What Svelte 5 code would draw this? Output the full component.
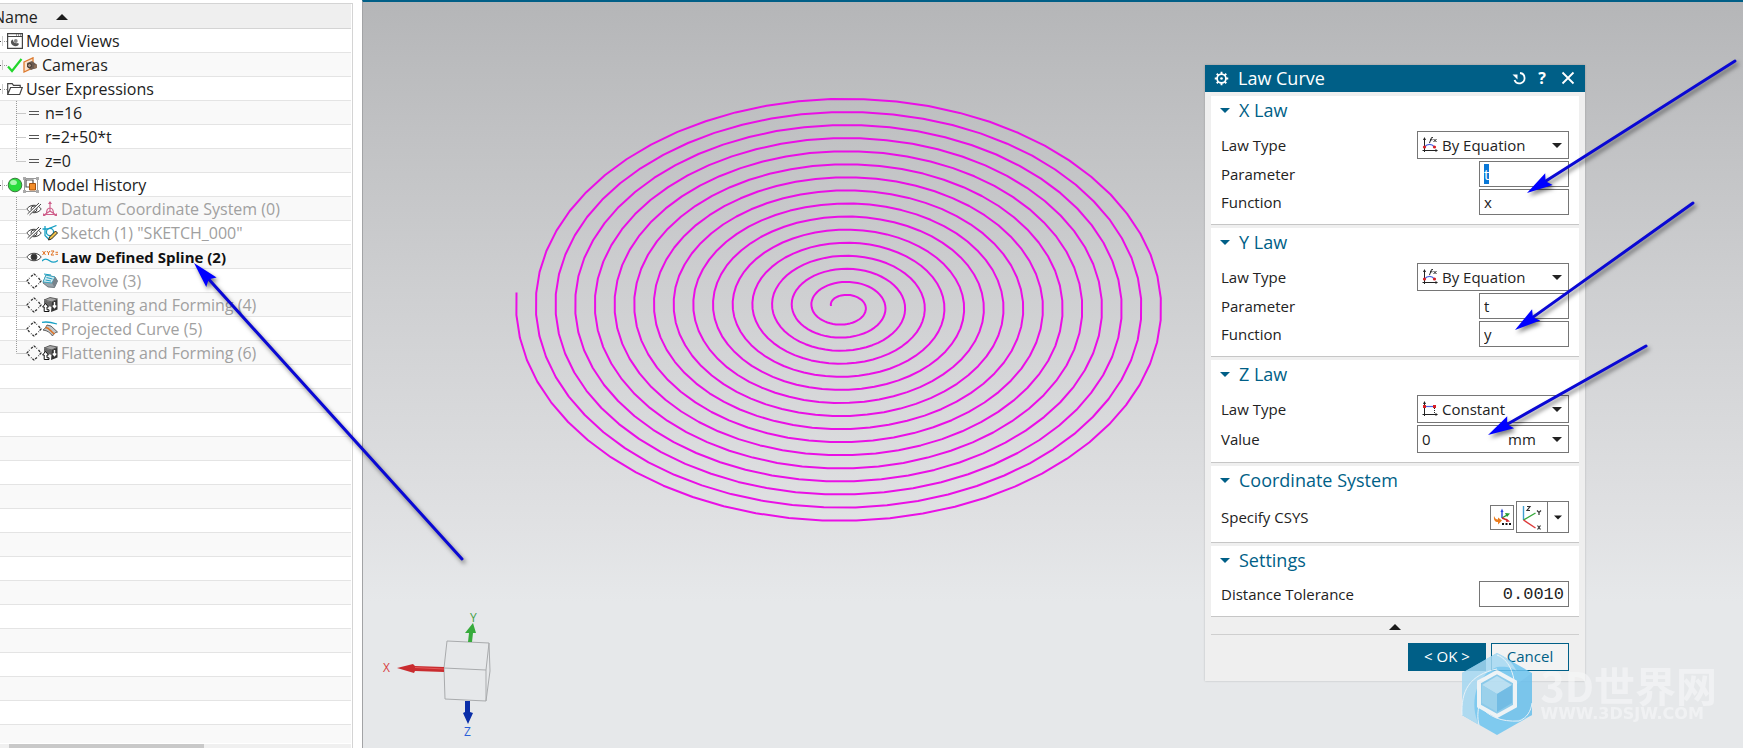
<script lang="ts">
  import { onMount } from "svelte";

  type Child = { label: string; vis?: string; icon: string; dim?: boolean; active?: boolean };
  type Node = { label: string; icons: string[]; children: Child[] };

  const tree: Node[] = [
    { label: "Model Views", icons: ["views"], children: [] },
    { label: "Cameras", icons: ["check", "camera"], children: [] },
    {
      label: "User Expressions",
      icons: ["folder"],
      children: [
        { label: "n=16", icon: "equals" },
        { label: "r=2+50*t", icon: "equals" },
        { label: "z=0", icon: "equals" },
      ],
    },
    {
      label: "Model History",
      icons: ["ball", "history"],
      children: [
        { label: "Datum Coordinate System (0)", vis: "hidden", icon: "datum", dim: true },
        { label: 'Sketch (1) "SKETCH_000"', vis: "hidden", icon: "sketch", dim: true },
        { label: "Law Defined Spline (2)", vis: "eye", icon: "law", active: true },
        { label: "Revolve (3)", vis: "ghost", icon: "revolve", dim: true },
        { label: "Flattening and Forming (4)", vis: "ghost", icon: "flatten", dim: true },
        { label: "Projected Curve (5)", vis: "ghost", icon: "project", dim: true },
        { label: "Flattening and Forming (6)", vis: "ghost", icon: "flatten", dim: true },
      ],
    },
  ];

  const laws = [
    { axis: "X", type: "By Equation", parameter: "t", fn: "x" },
    { axis: "Y", type: "By Equation", parameter: "t", fn: "y" },
  ];

  const arrows = [
    { tip: [194, 263], tail: [462, 559] },
    { tip: [1527, 193], tail: [1735, 61] },
    { tip: [1515, 330], tail: [1693, 203] },
    { tip: [1488, 435], tail: [1646, 346] },
  ].map(({ tip, tail }) => {
    const dx = tail[0] - tip[0];
    const dy = tail[1] - tip[1];
    return {
      x: tip[0],
      y: tip[1],
      length: Math.hypot(dx, dy),
      angle: (Math.atan2(dy, dx) * 180) / Math.PI,
    };
  });

  // r grows linearly over n turns, seen from a tilted camera
  function spiralPath(n: number) {
    const steps = n * 60;
    const points: string[] = [];
    for (let i = 0; i <= steps; i++) {
      const turn = i / 60;
      const a = turn * Math.PI * 2 + 0.065;
      const r = 12.5 + 19.7 * turn;
      const x = 480.5 - r * Math.cos(a);
      const y = 306.5 - r * 0.664 * Math.sin(a);
      points.push(`${x.toFixed(1)} ${y.toFixed(1)}`);
    }
    return "M" + points.join("L");
  }

  const spiral = spiralPath(16);

  onMount(() => {
    const first = document.getElementById("param-X") as HTMLInputElement;
    first.focus();
    first.select();
  });
</script>

{#snippet icon(name: string)}
  <svg class="icon" viewBox="0 0 16 16" aria-hidden="true">
    {#if name === "views"}
      <path d="M.6.6h14.8v14.8H.6zM.6 3.5h14.8" fill="#fff" stroke="#444" stroke-width="1.2" />
      <path d="M9 2h1M11 2h1M13 2h1" stroke="#444" />
      <path d="M6 6.500a3 3 0 0 0-2 3.500c.5 3 5 4 7 2.500 1-.8 1-2 0-2.500-3 1-5-1-5-3.500z" fill="#555" />
      <circle cx="8.800" cy="8" r="1.900" fill="#888" />
    {:else if name === "check"}
      <path d="M1 9.500 5 14 14.500 2" fill="none" stroke="#22d62c" stroke-width="2.200" />
    {:else if name === "camera"}
      <path d="M1 5 10 .8v10L1 15z" fill="#fbe3cf" stroke="#dd7b2f" stroke-width="1.300" />
      <path d="m4 6 5-2 4 3v4l-5 2-4-3z" fill="#6b5a50" />
      <circle cx="6.500" cy="8.500" r="2" fill="#a58d7e" stroke="#3b332e" />
      <path d="M11 8.500 14 7v4l-3 1z" fill="#8a6d58" />
    {:else if name === "folder"}
      <path d="M.7 13.500V2.700h4.500l1.300 1.600h6.700v2.200M.7 13.500 3.600 6.500h11.700l-2.600 7z" fill="#fff" stroke="#444" stroke-width="1.200" />
    {:else if name === "equals"}
      <path d="M3 6.500h10M3 9.500h10" stroke="#555" />
    {:else if name === "ball"}
      <circle cx="8" cy="8" r="6.800" fill="#29dc3c" stroke="#3a7a3e" />
      <ellipse cx="6.500" cy="5.500" rx="3.400" ry="2.600" fill="#a9f7ad" />
    {:else if name === "history"}
      <path d="M1.500 1.500h13v13h-13z" fill="#fff" stroke="#999" />
      <path d="M0 0h3v3H0zM13 0h3v3h-3zM0 13h3v3H0zM13 13h3v3h-3z" fill="#aaa" />
      <path d="M3 3h7v7H3z" fill="#fff" stroke="#555" stroke-width="1.200" />
      <path d="M6.500 6.500h6V13h-6z" fill="#f28c28" stroke="#a5520c" />
    {:else if name === "hidden" || name === "eye"}
      <path d="M.8 8C4 3 12 3 15.200 8 12 13 4 13 .8 8z" fill="#fff" stroke="#444" />
      <circle cx="8" cy="8" r="3" fill={name === "eye" ? "#333" : "none"} stroke="#444" />
      {#if name === "hidden"}
        <path d="M2.500 13.500 14 2.500" stroke="#fff" stroke-width="3" />
        <path d="M1.500 13 13 2M3.500 14 15 3" stroke="#444" />
      {/if}
    {:else if name === "ghost"}
      <path d="M5 3.500 8 1l3 2.500M12.500 5 15 8l-2.500 3M11 12.500 8 15l-3-2.500M3.500 11 1 8l2.500-3" fill="none" stroke="#333" stroke-width="1.300" stroke-dasharray="2.400 1.200" />
    {:else if name === "datum"}
      <path d="M8 10V2M8 10l-6 4M8 10l6 4M4.500 13c0-4 1-6 3.500-6s3.500 2 3.500 6M3 13.500h10" fill="none" stroke="#cf5f8b" stroke-width="1.200" />
      <path d="m6 3 2-3 2 3zM1 12v3h3zM15 12v3h-3z" fill="#cf5f8b" />
    {:else if name === "sketch"}
      <path d="M.5 4h5l9-3.500M3 1v9.500l3.500 3.500" fill="none" stroke="#18a0c4" stroke-width="1.300" />
      <circle cx="8" cy="7" r="3.600" fill="none" stroke="#18a0c4" stroke-width="1.300" />
      <path d="m6.500 15 1-3 6-6 2 2-6 6z" fill="#f0c24a" stroke="#222" />
    {:else if name === "law"}
      <path d="m.5 2 3 4m0-4-3 4M5 2l1.500 2L8 2M6.500 4v2M9 2h3L9 6h3M13.500 3.300H16M13.500 5.300H16" fill="none" stroke="#e07020" />
      <path d="M0 12c3-3.500 6-1.500 8 0s5 1.500 8-.5" fill="none" stroke="#18a0c4" stroke-width="1.300" />
    {:else if name === "revolve"}
      <path d="m4 2 9 2 2.500 4-3 6.500L6 14 1 10z" fill="#98a3aa" stroke="#59646b" stroke-width=".8" />
      <path d="m4 2 9 2-3 6-9-1z" fill="#d3eaf1" stroke="#3ba4be" />
      <path d="m4.500 4.500 6 1.500M3.500 7l5.500 1M2 1l7 1" stroke="#18a0c4" />
      <path d="m10 10 2.500 4.500 3-6.500L13 4z" fill="#77828a" />
    {:else if name === "flatten"}
      <path d="m2 3 6-2.500 7.500 1.500L10 5z" fill="#a5a5a5" stroke="#444" stroke-width=".8" />
      <path d="M2 3.500 10 5v5L2 8z" fill="#666" />
      <path d="m10 5 5.500-2.500v10L9 15z" fill="#333" />
      <path d="M12.500 5v5M10.800 8.500l1.700 2.200 1.700-2.200" fill="none" stroke="#fff" stroke-width="1.400" />
      <path d="M3.500 6.500.6 10h1.600v4.500H7V12.800H5V10h1.500z" fill="#fff" stroke="#111" />
    {:else if name === "project"}
      <path d="M0 1.500c5-1.500 10 0 15 1.500" fill="none" stroke="#18a0c4" stroke-width="1.300" />
      <path d="M1 9c2-1 3-3 4-5l4 1 6.500 6c-2 0-4 2-5 4-2-3-5-5.500-9.500-6z" fill="#c3c6c8" stroke="#555" stroke-width=".9" />
      <path d="M3.500 6.500c4 0 5 4 9 6.500" fill="none" stroke="#e07020" stroke-width="1.500" />
    {:else if name === "equation" || name === "constant"}
      <path d="M2.500 1v14M.5 13.500h14.500" stroke="#222" />
      <path d="M1 3 2.500 0 4 3zM13.500 12l2.500 1.500-2.500 1.500z" fill="#222" />
      {#if name === "equation"}
        <path d="M2.500 10c3-3.500 7-3.500 10 0" fill="none" stroke="#4c62e0" stroke-width="1.200" />
        <path d="M7.500 6 9.500.6h1.500M8 2.800h2.500M11.500 2l3 3M14.500 2l-3 3" fill="none" stroke="#222" />
        <circle cx="2.500" cy="10" r="1.600" fill="#d61f26" />
        <circle cx="12.500" cy="10" r="1.600" fill="#d61f26" />
      {:else}
        <path d="M2.500 5.500H12" stroke="#4c62e0" stroke-width="1.200" />
        <path d="M12.500 7v6" stroke="#222" stroke-dasharray="1 1" />
        <path d="M1 4h3v3H1zM11 4h3v3h-3z" fill="#d61f26" />
      {/if}
    {/if}
  </svg>
{/snippet}

{#snippet down()}
  <svg class="down" viewBox="0 0 10 5" aria-hidden="true"><path d="M0 0h10L5 5z" fill="currentColor" /></svg>
{/snippet}

{#snippet heading(text: string)}
  <h2><button type="button">{@render down()}{text}</button></h2>
{/snippet}

<div class="app">
  <aside class="navigator">
    <header>
      <span>Name</span>
      <svg class="sort" viewBox="0 0 12 6" aria-hidden="true"><path d="M0 6h12L6 0z" fill="#1b1b1b" /></svg>
    </header>
    <div class="rows">
      {#each tree as node}
        <div class="row root">
          <span class="expander"></span>
          {#each node.icons as name}
            {@render icon(name)}
          {/each}
          <span class="label">{node.label}</span>
        </div>
        {#each node.children as child, i}
          <div class="row child" class:dim={child.dim} class:active={child.active}>
            <svg class="guide" viewBox="0 0 10 24" aria-hidden="true">
              <path d={`M.5 0V${i === node.children.length - 1 ? 12 : 24}M.5 12.500H10`} stroke="#999" stroke-dasharray="1 1" />
            </svg>
            {#if child.vis}
              {@render icon(child.vis)}
            {/if}
            {@render icon(child.icon)}
            <span class="label">{child.label}</span>
          </div>
        {/each}
      {/each}
      <div class="filler"></div>
    </div>
    <div class="scrollbar"><div class="thumb"></div></div>
  </aside>

  <main class="viewport">
    <svg class="curve" aria-hidden="true">
      <path d={spiral} fill="none" stroke="#ea0fe6" stroke-width="2" stroke-linejoin="round" />
    </svg>

    <svg class="triad" viewBox="0 -12 120 150" aria-hidden="true">
      <path d="m67 31 42 2-3 27-42-2zM64 58l1 31 41 2V60M109 33l1 28-4 30" fill="none" stroke="#a9abad" />
      <path d="m88 32 1-9h-4l8-10 3 10h-3l-1 9z" fill="#37ab3c" />
      <path d="M64 57v5l-29-1-1 2-17-5 16-4 2 2z" fill="#c92c2f" />
      <path d="M35 57.500l29 1.500" stroke="#e5585a" />
      <path d="M85 91h5v11l3 1-5 11-5-11 2-1z" fill="#0a2ea8" />
      <text x="90" y="12" class="y">Y</text>
      <text x="3" y="62" class="x">X</text>
      <text x="84" y="126" class="z">Z</text>
    </svg>

    <form class="dialog" aria-label="Law Curve">
      <div class="titlebar">
        <svg class="gear" viewBox="0 0 16 16" aria-hidden="true">
          <circle cx="8" cy="8" r="4.700" fill="none" stroke="#fff" stroke-width="1.800" />
          <circle cx="8" cy="8" r="1.400" fill="#fff" />
          <path d="M8 .8v2.500M8 12.700v2.500M.8 8h2.500M12.700 8h2.500M2.900 2.900l1.800 1.800M11.300 11.300l1.800 1.800M2.900 13.100l1.800-1.800M11.300 4.700l1.800-1.800" stroke="#fff" stroke-width="2" />
        </svg>
        <h1>Law Curve</h1>
        <button type="button" aria-label="Reset">
          <svg viewBox="0 0 14 14" aria-hidden="true">
            <path d="M8 2a5.200 5.200 0 1 1-5.500 7" fill="none" stroke="#fff" stroke-width="1.800" />
            <path d="M.5 3.500h5v5z" fill="#fff" />
          </svg>
        </button>
        <button type="button" class="help" aria-label="Help">?</button>
        <button type="button" aria-label="Close">
          <svg viewBox="0 0 14 14" aria-hidden="true"><path d="m1.500 1.500 11 11m0-11-11 11" stroke="#fff" stroke-width="1.800" /></svg>
        </button>
      </div>

      {#each laws as law}
        <section>
          {@render heading(`${law.axis} Law`)}
          <div class="field">
            <label for="type-{law.axis}">Law Type</label>
            <div class="combo">
              {@render icon("equation")}
              <select id="type-{law.axis}"><option>{law.type}</option></select>
              {@render down()}
            </div>
          </div>
          <div class="field">
            <label for="param-{law.axis}">Parameter</label>
            <input id="param-{law.axis}" class="box" value={law.parameter} />
          </div>
          <div class="field">
            <label for="fn-{law.axis}">Function</label>
            <input id="fn-{law.axis}" class="box" value={law.fn} />
          </div>
        </section>
      {/each}

      <section>
        {@render heading("Z Law")}
        <div class="field">
          <label for="type-Z">Law Type</label>
          <div class="combo">
            {@render icon("constant")}
            <select id="type-Z"><option>Constant</option></select>
            {@render down()}
          </div>
        </div>
        <div class="field">
          <label for="value-Z">Value</label>
          <div class="combo">
            <input id="value-Z" value="0" />
            <select class="unit" aria-label="Unit"><option>mm</option></select>
            {@render down()}
          </div>
        </div>
      </section>

      <section>
        {@render heading("Coordinate System")}
        <div class="field">
          <span class="caption">Specify CSYS</span>
          <div class="csys">
            <button type="button" class="small" aria-label="CSYS Dialog">
              <svg viewBox="0 0 20 20" aria-hidden="true">
                <path d="M10 11V4" stroke="#2745d8" stroke-width="1.400" />
                <path d="m8.500 5 1.500-3.500L11.500 5z" fill="#2745d8" />
                <path d="m10 11 5-3" stroke="#249a34" stroke-width="1.400" />
                <path d="m13 6 5 .5-3 3.500z" fill="#249a34" />
                <path d="m10 11 5 2" stroke="#cf2b2b" stroke-width="1.400" />
                <path d="m14.500 11.500 3.500 3-4 .5z" fill="#cf2b2b" />
                <path d="M2 9c-.5 4 1 6 4 6v2.500l4-4-4-3v2c-2 0-3-1-4-3.500z" fill="#ea7c1e" />
                <path d="M10 16h2v2h-2zM13.500 16h2v2h-2zM17 16h2v2h-2z" fill="#111" />
              </svg>
            </button>
            <button type="button" class="large" aria-label="Inferred">
              <svg viewBox="0 0 24 28" aria-hidden="true">
                <path d="M3.500 17V3" stroke="#3e9ed0" stroke-width="1.400" />
                <path d="m3.500 17 12-7" stroke="#35a83a" stroke-width="1.400" />
                <path d="m3.500 17 12 8" stroke="#dd3a3a" stroke-width="1.400" />
                <path d="M7 3.500h3L7 7.500h3M17 7.500l2 2 2-2M19 9.500V12M17.500 22.500l3 4m0-4-3 4" fill="none" stroke="#333" stroke-width="1.200" />
              </svg>
            </button>
            <button type="button" class="drop" aria-label="More CSYS types">{@render down()}</button>
          </div>
        </div>
      </section>

      <section>
        {@render heading("Settings")}
        <div class="field">
          <label for="tolerance">Distance Tolerance</label>
          <input id="tolerance" class="box number" value="0.0010" />
        </div>
      </section>

      <button type="button" class="collapse" aria-label="Show less">
        <svg class="sort" viewBox="0 0 12 6" aria-hidden="true"><path d="M0 6h12L6 0z" fill="#1b1b1b" /></svg>
      </button>
      <footer>
        <button type="button" class="ok">&lt; OK &gt;</button>
        <button type="button" class="cancel">Cancel</button>
      </footer>
    </form>

    <div class="watermark">
      <svg viewBox="0 0 72 82" aria-hidden="true">
        <path d="M36 0 71 20v42L36 82 1 62V20z" fill="#6ec5f0" />
        <path d="M36 0 1 20v42l17 10C8 52 14 22 36 14c10-1 17 1 20 5C51 8 45 4 36 0z" fill="#a5d8f2" />
        <path d="M71 20v42L53 68c-14 2-24-3-33-14l16 9 19-11V32z" fill="#68bfec" />
        <path d="M1 62C0 38 8 22 36 16M18 72c-2-8-1-14 0-20 10 12 22 17 40 16 8-3 12-10 13-18M36 2c14 5 20 24 18 50" fill="none" stroke="#e9f4fa" />
        <path d="m36 19 18 10v24L36 63 18 53V29z" fill="#7cc5ea" stroke="#f0f5f8" stroke-width="4" />
        <path d="m36 23 15 9-15 9-15-9z" fill="#b3def3" />
        <path d="m51 32v18l-15 9V41z" fill="#5fb5e3" />
        <path d="M21 32v18l15 9V41z" fill="#8fcdec" />
      </svg>
      <div>
        <strong>3D世界网</strong>
        <span>WWW.3DSJW.COM</span>
      </div>
    </div>
  </main>

  <svg class="arrows" aria-hidden="true">
    {#each arrows as a}
      <g transform="translate({a.x} {a.y}) rotate({a.angle})">
        <path d="M20 0H{a.length}" stroke="#0a08d4" stroke-width="3" stroke-linecap="round" />
        <path d="m0 0 26-7-4 7 4 7z" fill="#0000ff" />
      </g>
    {/each}
  </svg>
</div>

<style>
  :global(body) {
    margin: 0;
  }

  .app {
    position: relative;
    display: grid;
    grid-template-columns: 353px minmax(0, 1fr);
    gap: 9px;
    height: 100vh;
    overflow: hidden;
    background: #fff;
    color: #222;
    font: 16px/24px "Open Sans", "Noto Sans CJK SC", sans-serif;
  }

  h1,
  h2 {
    margin: 0;
    font-weight: 400;
    font-size: 18px;
  }

  button,
  input,
  select {
    box-sizing: border-box;
    margin: 0;
    padding: 0;
    border: 0;
    background: none;
    color: inherit;
    font: inherit;
    outline: none;
  }

  .icon {
    flex: none;
    width: 16px;
    height: 16px;
  }

  .down {
    flex: none;
    width: 10px;
    height: 5px;
  }

  .sort {
    width: 12px;
    height: 6px;
  }

  /* part navigator */
  .navigator {
    display: flex;
    flex-direction: column;
    min-height: 0;
    margin-top: 3px;
    border-top: 1px solid #d4d4d4;
    border-right: 1px solid #d4d4d4;
  }

  .navigator header {
    display: flex;
    flex: none;
    align-items: center;
    gap: 18px;
    box-sizing: border-box;
    height: 25px;
    padding-top: 2px;
    margin-right: 1px;
    border-bottom: 1px solid #d4d4d4;
    background: #efefef;
  }

  .navigator header span {
    margin-left: -7px;
  }

  .rows {
    display: flex;
    flex: 1;
    flex-direction: column;
    min-height: 0;
    margin-right: 1px;
    overflow: hidden;
  }

  .row {
    display: flex;
    flex: none;
    align-items: center;
    box-sizing: border-box;
    height: 24px;
    border-bottom: 1px solid #e4e4e4;
    white-space: nowrap;
  }

  .row:nth-child(even) {
    background: #f9f9f9;
  }

  .label {
    margin-left: 3px;
  }

  .expander {
    width: 7px;
    height: 10px;
    background:
      linear-gradient(#444, #444) 0 5px / 1px 1px no-repeat,
      linear-gradient(#ccc, #ccc) 2px 0 / 1px 10px no-repeat,
      repeating-linear-gradient(90deg, #999 0 1px, transparent 1px 2px) 4px 5px / 3px 1px no-repeat;
  }

  .guide {
    flex: none;
    width: 10px;
    height: 24px;
    margin-left: 16px;
  }

  .dim {
    color: #a0a0a0;
  }

  .active {
    color: #111;
    font-weight: 700;
    font-size: 15px;
  }

  .filler {
    flex: 1;
    background: repeating-linear-gradient(#fff 0 23px, #e4e4e4 23px 24px, #f9f9f9 24px 47px, #e4e4e4 47px 48px);
  }

  .scrollbar {
    flex: none;
    height: 4px;
    margin: 1px 1px 0 0;
    padding-left: 9px;
    background: #f0f0f0;
  }

  .thumb {
    width: 57%;
    height: 100%;
    background: #c9c9c9;
  }

  /* graphics window */
  .viewport {
    position: relative;
    border-top: 2px solid #005f87;
    border-left: 1px solid #a2a3a5;
    background: linear-gradient(#b5b6b8, #bcbdbf 80px, #cfd0d2 300px, #e0e1e3 520px, #e6e8ea 600px);
  }

  .curve {
    position: absolute;
    top: -2px;
    left: 0;
    width: 100%;
    height: 100%;
  }

  .triad {
    position: absolute;
    bottom: 0;
    left: 17px;
    width: 120px;
    height: 150px;
    font-size: 12px;
  }

  .triad .x {
    fill: #d8403f;
  }

  .triad .y {
    fill: #43a047;
  }

  .triad .z {
    fill: #2a5fd8;
  }

  .arrows {
    position: absolute;
    inset: 0;
    width: 100%;
    height: 100%;
    pointer-events: none;
    filter: drop-shadow(2px 3px 2px rgba(0, 0, 0, 0.5));
  }

  /* dialog */
  .dialog {
    position: absolute;
    top: 63px;
    right: 158px;
    width: 380px;
    background: #efefef;
    box-shadow: 0 0 2px rgba(0, 0, 0, 0.2);
    font-size: 15px;
  }

  .titlebar {
    display: flex;
    align-items: center;
    gap: 9px;
    box-sizing: border-box;
    height: 27px;
    margin-bottom: 4px;
    padding: 0 10px 1px 9px;
    background: #005f87;
    color: #fff;
  }

  .titlebar h1 {
    flex: 1;
  }

  .gear {
    width: 15px;
    height: 15px;
  }

  .titlebar button {
    display: flex;
    justify-content: center;
    width: 14px;
  }

  .titlebar button svg {
    width: 14px;
    height: 14px;
  }

  .titlebar .help {
    margin-right: 3px;
    font-weight: 700;
    font-size: 16px;
  }

  section {
    display: flex;
    flex-direction: column;
    gap: 2px;
    margin: 0 6px 3px;
    padding: 0 10px 9px;
    border-bottom: 1px solid #c6c6c6;
    background: #fff;
  }

  h2 {
    margin-bottom: 5px;
    color: #005f87;
    line-height: 28px;
  }

  h2 button {
    display: flex;
    align-items: center;
    gap: 9px;
    margin-left: -1px;
  }

  .field {
    display: flex;
    align-items: center;
    justify-content: space-between;
  }

  .box {
    width: 90px;
    height: 26px;
    padding: 0 4px;
    border: 1px solid #767676;
    background: #fff;
  }

  .box::selection {
    background: #0a78d7;
    color: #fff;
  }

  .number {
    font: 17px "Liberation Mono", monospace;
    text-align: right;
  }

  .combo {
    display: flex;
    align-items: center;
    box-sizing: border-box;
    width: 152px;
    height: 28px;
    padding: 0 6px 0 4px;
    border: 1px solid #767676;
    background: #fff;
  }

  .combo select {
    flex: 1;
    min-width: 0;
    margin-left: 4px;
    appearance: none;
  }

  .combo input {
    flex: 1;
    min-width: 0;
  }

  .combo .unit {
    flex: none;
    width: 44px;
  }

  .csys {
    display: flex;
    align-items: center;
    color: #1b1b1b;
  }

  .csys button {
    display: flex;
    align-items: center;
    justify-content: center;
    border: 1px solid #767676;
    background: #fff;
  }

  .csys .down {
    width: 8px;
  }

  .csys .small {
    width: 24px;
    height: 25px;
    margin-right: 2px;
  }

  .small svg {
    width: 20px;
    height: 20px;
  }

  .csys .large {
    width: 32px;
    height: 32px;
  }

  .large svg {
    width: 24px;
    height: 28px;
  }

  .csys .drop {
    width: 22px;
    height: 32px;
    margin-left: -1px;
  }

  .collapse {
    display: flex;
    align-items: center;
    justify-content: center;
    width: calc(100% - 12px);
    height: 15px;
    margin: 0 6px;
    border-bottom: 1px solid #cfcfcf;
  }

  footer {
    display: flex;
    justify-content: flex-end;
    gap: 5px;
    padding: 8px 16px 10px;
  }

  footer button {
    width: 78px;
    height: 28px;
    padding-bottom: 2px;
    border: 1px solid #005f87;
  }

  .ok {
    background: #005f87;
    color: #fff;
  }

  .cancel {
    background: #f3f3f3;
    color: #005f87;
  }

  .watermark {
    position: absolute;
    right: 26px;
    bottom: 13px;
    display: flex;
    align-items: center;
    gap: 8px;
    color: #f6f7f8;
    pointer-events: none;
  }

  .watermark svg {
    width: 72px;
    height: 82px;
    opacity: 0.85;
  }

  .watermark div {
    display: flex;
    flex-direction: column;
    opacity: 0.65;
  }

  .watermark strong {
    font: 700 41px/40px "Noto Sans CJK SC", sans-serif;
  }

  .watermark span {
    font: 700 16px/20px "DejaVu Sans", sans-serif;
  }
</style>
